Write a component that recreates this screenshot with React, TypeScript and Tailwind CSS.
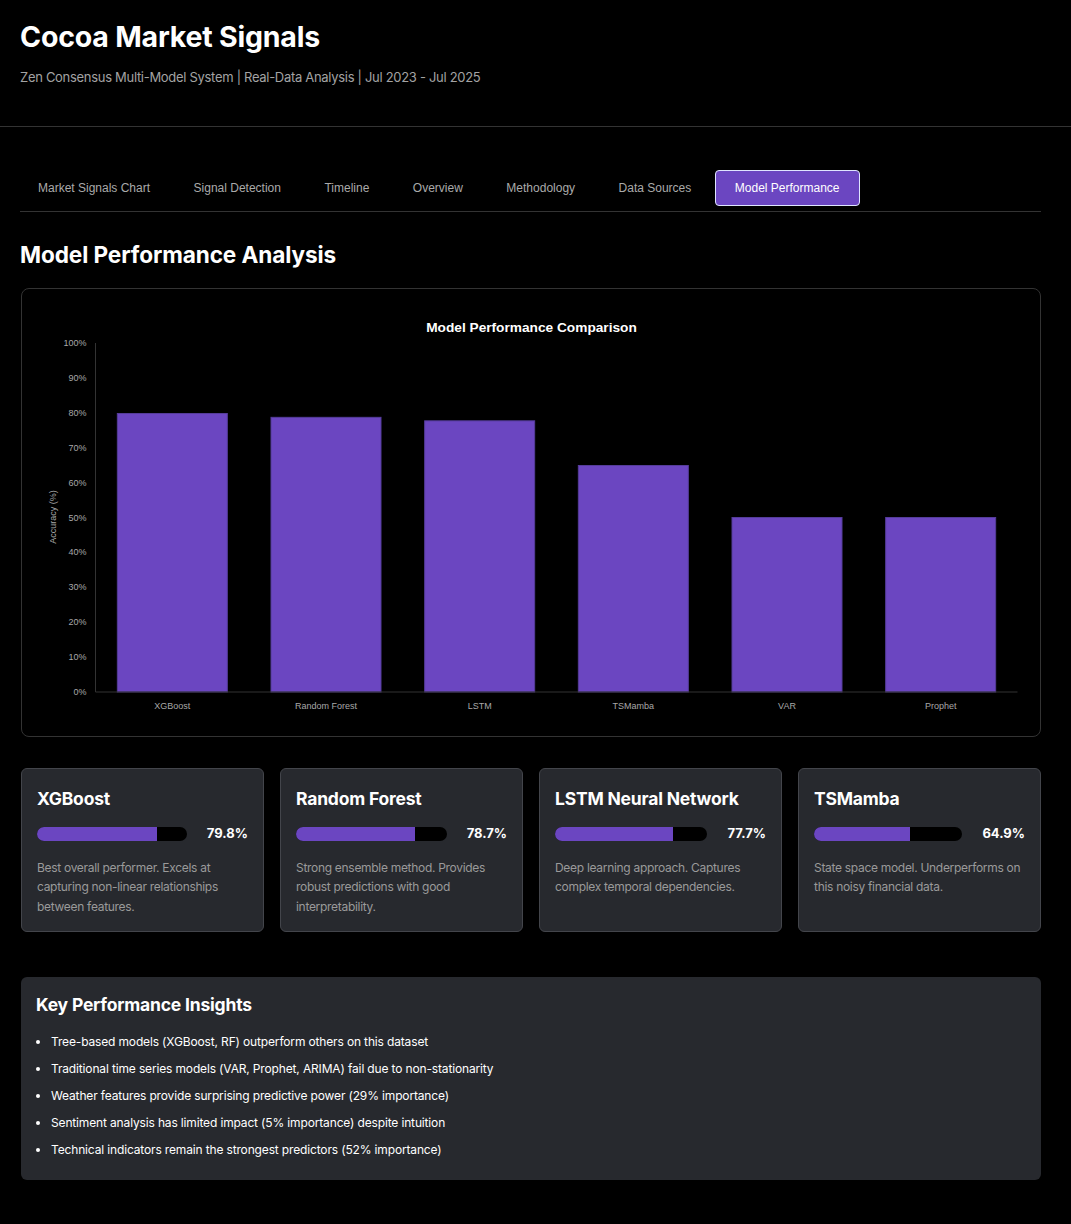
import React from "react";

const tabs = [
  "Market Signals Chart",
  "Signal Detection",
  "Timeline",
  "Overview",
  "Methodology",
  "Data Sources",
  "Model Performance",
];

const bars = [
  { label: "XGBoost", value: 79.8 },
  { label: "Random Forest", value: 78.7 },
  { label: "LSTM", value: 77.7 },
  { label: "TSMamba", value: 64.9 },
  { label: "VAR", value: 50 },
  { label: "Prophet", value: 50 },
];

const models = [
  {
    name: "XGBoost",
    value: 79.8,
    text: "Best overall performer. Excels at capturing non-linear relationships between features.",
  },
  {
    name: "Random Forest",
    value: 78.7,
    text: "Strong ensemble method. Provides robust predictions with good interpretability.",
  },
  {
    name: "LSTM Neural Network",
    value: 77.7,
    text: "Deep learning approach. Captures complex temporal dependencies.",
  },
  {
    name: "TSMamba",
    value: 64.9,
    text: "State space model. Underperforms on this noisy financial data.",
  },
];

const insights = [
  "Tree-based models (XGBoost, RF) outperform others on this dataset",
  "Traditional time series models (VAR, Prophet, ARIMA) fail due to non-stationarity",
  "Weather features provide surprising predictive power (29% importance)",
  "Sentiment analysis has limited impact (5% importance) despite intuition",
  "Technical indicators remain the strongest predictors (52% importance)",
];

function PerformanceChart() {
  const left = 73;
  const right = 995;
  const top = 54;
  const bottom = 403;
  const h = bottom - top;
  const cat = (right - left) / bars.length;
  const ticks = [0, 10, 20, 30, 40, 50, 60, 70, 80, 90, 100];
  return (
    <svg
      width="100%"
      height="447"
      viewBox="0 0 1017 447"
      style={{ fontFamily: "'Liberation Sans', Arial, sans-serif" }}>
      <text x="509" y="43" textAnchor="middle" fill="#ffffff" fontSize="13.7" fontWeight="bold">
        Model Performance Comparison
      </text>
      {ticks.map((t) => (
        <text
          key={t}
          x="64"
          y={bottom - (t / 100) * h + 3}
          textAnchor="end"
          fill="#a8a8a8"
          fontSize="9">
          {t}%
        </text>
      ))}
      <text
        x="0"
        y="0"
        transform="translate(33 228) rotate(-90)"
        textAnchor="middle"
        fill="#a8a8a8"
        fontSize="9">
        Accuracy (%)
      </text>
      {bars.map((b, i) => {
        const bh = (b.value / 100) * h;
        const x = left + i * cat + (cat - 110) / 2;
        return (
          <g key={b.label}>
            <rect
              x={x}
              y={bottom - bh}
              width="110"
              height={bh}
              fill="#6b46c1"
              stroke="#553c9a"
              strokeWidth="1"
            />
            <text x={left + i * cat + cat / 2} y="420" textAnchor="middle" fill="#a8a8a8" fontSize="9">
              {b.label}
            </text>
          </g>
        );
      })}
      <line x1={left} y1={top} x2={left} y2={bottom} stroke="#333333" strokeWidth="1" />
      <line x1={left} y1={bottom} x2={right} y2={bottom} stroke="#333333" strokeWidth="1" />
    </svg>
  );
}

export default function App() {
  return (
    <div
      className="min-h-screen bg-black text-white"
      style={{ fontFamily: "Inter, 'Noto Sans', sans-serif" }}>
      {/* Header */}
      <header className="px-5 pt-5 pb-10 border-b border-[#333333]">
        <h1 className="text-[28.5px] leading-[34px] font-bold tracking-[-0.2px]">Cocoa Market Signals</h1>
        <p className="mt-[14px] text-[13px] leading-[18px] tracking-[-0.3px] text-[#a3a3a3]">
          Zen Consensus Multi-Model System | Real-Data Analysis | Jul 2023 - Jul 2025
        </p>
      </header>

      <main className="px-5 pt-[43px] pb-[45px] w-[1061px]">
        {/* Tabs */}
        <nav
          className="flex gap-[3.5px] pb-[5px] border-b border-[#333333]"
          style={{ fontFamily: "'Liberation Sans', Arial, sans-serif" }}>
          {tabs.map((t, i) => {
            const active = t === "Model Performance";
            return (
              <button
                key={t}
                className={`h-9 px-[19px] text-[12px] rounded-[4px] border ${i === 0 ? "-ml-0.5" : ""} ${active ? "bg-[#6b46c1] border-[#dfe4ff] text-white" : "border-transparent text-[#aaaaaa]"}`}>
                {t}
              </button>
            );
          })}
        </nav>

        <h2 className="mt-[30px] mb-5 text-[22.6px] leading-[26px] font-bold tracking-[-0.1px]">
          Model Performance Analysis
        </h2>

        {/* Chart */}
        <div className="w-[1020px] ml-px h-[449px] rounded-lg border border-[#333333] bg-black overflow-hidden">
          <PerformanceChart />
        </div>

        {/* Model cards */}
        <div className="mt-[31px] grid grid-cols-4 gap-4 w-[1020px] ml-px">
          {models.map((m) => (
            <div
              key={m.name}
              className="rounded-md border border-[#43454b] bg-[#27292e] px-[15px] pt-[18px] pb-[15px] h-[164px]">
              <h3 className="text-[17.5px] leading-6 font-bold tracking-[-0.2px]">{m.name}</h3>
              <div className="mt-[13px] flex items-center gap-5">
                <div className="flex-1 h-[14px] rounded-full bg-black overflow-hidden">
                  <div className="h-full bg-[#6b46c1]" style={{ width: `${m.value}%` }} />
                </div>
                <span className="text-[13px] font-bold">{m.value}%</span>
              </div>
              <p className="mt-[14px] text-[12px] leading-[19.5px] tracking-[-0.3px] text-[#9a9a9a]">
                {m.text}
              </p>
            </div>
          ))}
        </div>

        {/* Insights */}
        <div className="mt-[45px] w-[1020px] ml-px rounded-md bg-[#27292e] px-[15px] pt-[16px] pb-[21px]">
          <h3 className="text-[17.5px] leading-6 font-bold tracking-[-0.2px]">Key Performance Insights</h3>
          <ul className="mt-[15px] pl-[15px] list-disc text-[12px] leading-[19px] tracking-[-0.15px] flex flex-col gap-2">
            {insights.map((s) => (
              <li key={s}>{s}</li>
            ))}
          </ul>
        </div>
      </main>
    </div>
  );
}
